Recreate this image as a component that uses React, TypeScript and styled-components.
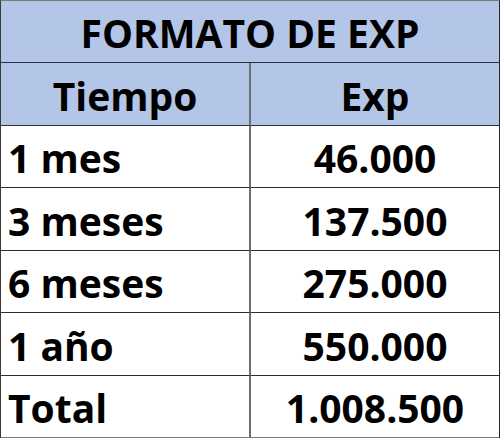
import React from "react";
import styled, { createGlobalStyle } from "styled-components";

const Global = createGlobalStyle`
  html, body { margin: 0; padding: 0; background: #ffffff; }
  body { font-family: "Open Sans", "Liberation Sans", sans-serif; }
`;

const Table = styled.div`
  width: 500px;
  box-sizing: border-box;
  display: grid;
  grid-template-columns: 250px 1fr;
  grid-auto-rows: 62.43px;
  border-top: 1px solid #7a7a7a;
  border-left: 1px solid #3a3a3a;
  border-right: 1px solid #262626;
`;

const Cell = styled.div<{ $head?: boolean; $align?: "left" | "center"; $span?: boolean; $last?: boolean; $right?: boolean }>`
  box-sizing: border-box;
  display: flex;
  align-items: flex-end;
  justify-content: ${(p) => (p.$align === "left" ? "flex-start" : "center")};
  padding: 0 0 3px ${(p) => (p.$align === "left" ? "7px" : "0")};
  grid-column: ${(p) => (p.$span ? "1 / span 2" : "auto")};
  background: ${(p) => (p.$head ? "#b4c6e7" : "#ffffff")};
  border-bottom: 1px solid ${(p) => (p.$last ? "#7a7a7a" : p.$head ? "#2b3040" : "#2e2e2e")};
  border-right: ${(p) => (p.$right ? "2px solid #6e6e6e" : "none")};
  font-size: 39px;
  font-weight: 700;
  color: #000000;
  line-height: normal;
  white-space: nowrap;
`;

const rows: [string, string][] = [
  ["1 mes", "46.000"],
  ["3 meses", "137.500"],
  ["6 meses", "275.000"],
  ["1 año", "550.000"],
  ["Total", "1.008.500"],
];

export default function App() {
  return (
    <>
      <Global />
      <Table>
        <Cell $head $span>FORMATO DE EXP</Cell>
        <Cell $head $right>Tiempo</Cell>
        <Cell $head>Exp</Cell>
        {rows.map(([t, e], i) => (
          <React.Fragment key={t}>
            <Cell $align="left" $right $last={i === rows.length - 1}>{t}</Cell>
            <Cell $last={i === rows.length - 1}>{e}</Cell>
          </React.Fragment>
        ))}
      </Table>
    </>
  );
}
